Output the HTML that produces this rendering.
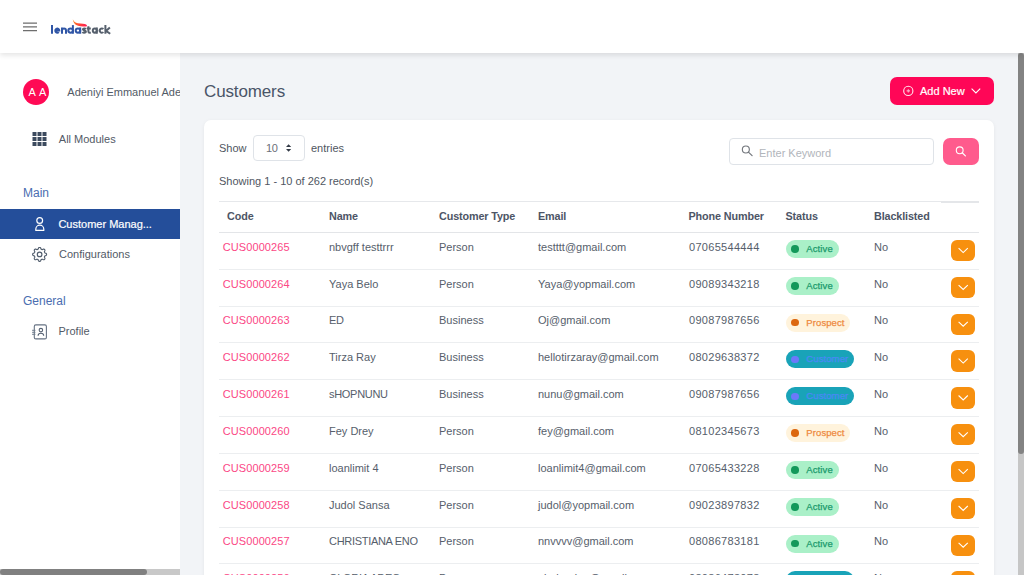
<!DOCTYPE html>
<html><head><meta charset="utf-8"><style>
*{margin:0;padding:0;box-sizing:border-box}
html,body{width:1024px;height:575px;overflow:hidden}
body{position:relative;background:#f2f4f7;font-family:"Liberation Sans",sans-serif}
.t{position:absolute;white-space:nowrap;line-height:1}
.abs{position:absolute}
svg{position:absolute;overflow:visible}
</style></head><body>
<div class="t" style="left:204px;top:83px;font-size:17px;color:#4a5568;letter-spacing:-0.13px;">Customers</div>
<div class="abs" style="left:890px;top:77px;width:104px;height:27.5px;background:#ff0657;border-radius:7px"></div>
<svg style="left:0;top:0" width="1" height="1"><circle cx="908.3" cy="90.9" r="4.6" fill="none" stroke="#fff" stroke-width="1.1" opacity="0.9"/><path d="M906.6 90.9h3.4M908.3 89.2v3.4" stroke="#ffb0c8" stroke-width="1.1"/><path d="M971.6 88.6l4.3 4.3 4.3-4.3" fill="none" stroke="#fff" stroke-width="1.1"/></svg>
<div class="t" style="left:920px;top:86px;font-size:11px;color:#ffffff;-webkit-text-stroke:0.2px #fff;">Add New</div>
<div class="abs" style="left:204px;top:120px;width:790px;height:480px;background:#fff;border-radius:7px;box-shadow:0 1px 4px rgba(0,0,0,0.06)"></div>
<div class="t" style="left:219px;top:143px;font-size:11px;color:#4f5661;">Show</div>
<div class="abs" style="left:253px;top:135px;width:52px;height:26px;border:1px solid #dfe3e8;border-radius:4px"></div>
<div class="t" style="left:266px;top:143px;font-size:11px;color:#6b7079;letter-spacing:-0.3px;">10</div>
<svg style="left:0;top:0" width="1" height="1"><path d="M286 147l2.6-2.8 2.6 2.8z M286 148.9l2.6 2.8 2.6-2.8z" fill="#333a46"/></svg>
<div class="t" style="left:311px;top:143px;font-size:11px;color:#4f5661;">entries</div>
<div class="t" style="left:219px;top:176px;font-size:11px;color:#4f5661;">Showing 1 - 10 of 262 record(s)</div>
<div class="abs" style="left:729px;top:138px;width:205px;height:27px;border:1px solid #dfe3e8;border-radius:4px"></div>
<svg style="left:0;top:0" width="1" height="1"><circle cx="745.85" cy="149.5" r="3.5" fill="none" stroke="#73777d" stroke-width="1.15"/><path d="M748.4 152.1l3.7 3.5" stroke="#73777d" stroke-width="1.2" stroke-linecap="round"/></svg>
<div class="t" style="left:759px;top:148px;font-size:11px;color:#b1b5bb;">Enter Keyword</div>
<div class="abs" style="left:943px;top:138px;width:36px;height:27px;background:#ff5b8d;border-radius:7px"></div>
<svg style="left:0;top:0" width="1" height="1"><circle cx="959.7" cy="150.3" r="3.4" fill="none" stroke="#fff" stroke-width="1.1"/><path d="M962.2 152.8l3.2 3.1" stroke="#fff" stroke-width="1.2" stroke-linecap="round"/></svg>
<div class="abs" style="left:219px;top:200.5px;width:722px;height:1px;background:#e6e8eb"></div>
<div class="abs" style="left:941px;top:201px;width:38px;height:2px;background:#e4e6e9"></div>
<div class="abs" style="left:219px;top:231.5px;width:760px;height:1.5px;background:#e3e5e8"></div>
<div class="t" style="left:227px;top:211px;font-size:10.8px;color:#4d5566;font-weight:700;letter-spacing:-0.12px;">Code</div>
<div class="t" style="left:329px;top:211px;font-size:10.8px;color:#4d5566;font-weight:700;letter-spacing:-0.12px;">Name</div>
<div class="t" style="left:439px;top:211px;font-size:10.8px;color:#4d5566;font-weight:700;letter-spacing:-0.12px;">Customer Type</div>
<div class="t" style="left:538px;top:211px;font-size:10.8px;color:#4d5566;font-weight:700;letter-spacing:-0.12px;">Email</div>
<div class="t" style="left:688.5px;top:211px;font-size:10.8px;color:#4d5566;font-weight:700;letter-spacing:-0.12px;">Phone Number</div>
<div class="t" style="left:785.5px;top:211px;font-size:10.8px;color:#4d5566;font-weight:700;letter-spacing:-0.12px;">Status</div>
<div class="t" style="left:874px;top:211px;font-size:10.8px;color:#4d5566;font-weight:700;letter-spacing:-0.12px;">Blacklisted</div>
<div class="t" style="left:222.7px;top:242px;font-size:11px;color:#fb4785;letter-spacing:0.1px;">CUS0000265</div>
<div class="t" style="left:329px;top:242px;font-size:11px;color:#565e6b;">nbvgff testtrrr</div>
<div class="t" style="left:439px;top:242px;font-size:11px;color:#565e6b;">Person</div>
<div class="t" style="left:538px;top:242px;font-size:11px;color:#565e6b;">testttt@gmail.com</div>
<div class="t" style="left:689px;top:242px;font-size:11px;color:#565e6b;letter-spacing:0.3px;">07065544444</div>
<div class="abs" style="left:785.5px;top:240.00px;width:53.5px;height:18px;background:#aaf0c8;border-radius:9px"></div>
<div class="abs" style="left:791.4px;top:245.20px;width:7.6px;height:7.6px;background:#13985a;border-radius:50%"></div>
<div class="t" style="left:806.3px;top:244px;font-size:9.5px;color:#1a9a6c;letter-spacing:0.1px;-webkit-text-stroke:0.25px #1a9a6c;">Active</div>
<div class="t" style="left:874px;top:242px;font-size:11px;color:#565e6b;">No</div>
<div class="abs" style="left:951px;top:240.00px;width:24px;height:21.2px;background:#f7900f;border-radius:6px"></div>
<svg style="left:0;top:0" width="1" height="1"><path d="M958.6 248.20l4.6 4.4 4.6-4.4" fill="none" stroke="#fff" stroke-width="1.1"/></svg>
<div class="abs" style="left:219px;top:268.83px;width:760px;height:1px;background:#eceef0"></div>
<div class="t" style="left:222.7px;top:279px;font-size:11px;color:#fb4785;letter-spacing:0.1px;">CUS0000264</div>
<div class="t" style="left:329px;top:279px;font-size:11px;color:#565e6b;">Yaya Belo</div>
<div class="t" style="left:439px;top:279px;font-size:11px;color:#565e6b;">Person</div>
<div class="t" style="left:538px;top:279px;font-size:11px;color:#565e6b;">Yaya@yopmail.com</div>
<div class="t" style="left:689px;top:279px;font-size:11px;color:#565e6b;letter-spacing:0.3px;">09089343218</div>
<div class="abs" style="left:785.5px;top:276.83px;width:53.5px;height:18px;background:#aaf0c8;border-radius:9px"></div>
<div class="abs" style="left:791.4px;top:282.03px;width:7.6px;height:7.6px;background:#13985a;border-radius:50%"></div>
<div class="t" style="left:806.3px;top:281px;font-size:9.5px;color:#1a9a6c;letter-spacing:0.1px;-webkit-text-stroke:0.25px #1a9a6c;">Active</div>
<div class="t" style="left:874px;top:279px;font-size:11px;color:#565e6b;">No</div>
<div class="abs" style="left:951px;top:276.83px;width:24px;height:21.2px;background:#f7900f;border-radius:6px"></div>
<svg style="left:0;top:0" width="1" height="1"><path d="M958.6 285.03l4.6 4.4 4.6-4.4" fill="none" stroke="#fff" stroke-width="1.1"/></svg>
<div class="abs" style="left:219px;top:305.66px;width:760px;height:1px;background:#eceef0"></div>
<div class="t" style="left:222.7px;top:315px;font-size:11px;color:#fb4785;letter-spacing:0.1px;">CUS0000263</div>
<div class="t" style="left:329px;top:315px;font-size:11px;color:#565e6b;letter-spacing:-0.3px;">ED</div>
<div class="t" style="left:439px;top:315px;font-size:11px;color:#565e6b;">Business</div>
<div class="t" style="left:538px;top:315px;font-size:11px;color:#565e6b;">Oj@gmail.com</div>
<div class="t" style="left:689px;top:315px;font-size:11px;color:#565e6b;letter-spacing:0.3px;">09087987656</div>
<div class="abs" style="left:785.5px;top:313.66px;width:64.5px;height:18px;background:#fff3dc;border-radius:9px"></div>
<div class="abs" style="left:791.4px;top:318.86px;width:7.6px;height:7.6px;background:#dc670f;border-radius:50%"></div>
<div class="t" style="left:806.3px;top:318px;font-size:9.5px;color:#ee8a40;letter-spacing:0.1px;-webkit-text-stroke:0.25px #ee8a40;">Prospect</div>
<div class="t" style="left:874px;top:315px;font-size:11px;color:#565e6b;">No</div>
<div class="abs" style="left:951px;top:313.66px;width:24px;height:21.2px;background:#f7900f;border-radius:6px"></div>
<svg style="left:0;top:0" width="1" height="1"><path d="M958.6 321.86l4.6 4.4 4.6-4.4" fill="none" stroke="#fff" stroke-width="1.1"/></svg>
<div class="abs" style="left:219px;top:342.49px;width:760px;height:1px;background:#eceef0"></div>
<div class="t" style="left:222.7px;top:352px;font-size:11px;color:#fb4785;letter-spacing:0.1px;">CUS0000262</div>
<div class="t" style="left:329px;top:352px;font-size:11px;color:#565e6b;">Tirza Ray</div>
<div class="t" style="left:439px;top:352px;font-size:11px;color:#565e6b;">Business</div>
<div class="t" style="left:538px;top:352px;font-size:11px;color:#565e6b;">hellotirzaray@gmail.com</div>
<div class="t" style="left:689px;top:352px;font-size:11px;color:#565e6b;letter-spacing:0.3px;">08029638372</div>
<div class="abs" style="left:785.5px;top:350.49px;width:68.5px;height:18px;background:#19a3b8;border-radius:9px"></div>
<div class="abs" style="left:791.4px;top:355.69px;width:7.6px;height:7.6px;background:#6c78fa;border-radius:50%"></div>
<div class="t" style="left:806.3px;top:354px;font-size:9.5px;color:#4a88f6;letter-spacing:0.1px;-webkit-text-stroke:0.25px #4a88f6;">Customer</div>
<div class="t" style="left:874px;top:352px;font-size:11px;color:#565e6b;">No</div>
<div class="abs" style="left:951px;top:350.49px;width:24px;height:21.2px;background:#f7900f;border-radius:6px"></div>
<svg style="left:0;top:0" width="1" height="1"><path d="M958.6 358.69l4.6 4.4 4.6-4.4" fill="none" stroke="#fff" stroke-width="1.1"/></svg>
<div class="abs" style="left:219px;top:379.32px;width:760px;height:1px;background:#eceef0"></div>
<div class="t" style="left:222.7px;top:389px;font-size:11px;color:#fb4785;letter-spacing:0.1px;">CUS0000261</div>
<div class="t" style="left:329px;top:389px;font-size:11px;color:#565e6b;letter-spacing:-0.3px;">sHOPNUNU</div>
<div class="t" style="left:439px;top:389px;font-size:11px;color:#565e6b;">Business</div>
<div class="t" style="left:538px;top:389px;font-size:11px;color:#565e6b;">nunu@gmail.com</div>
<div class="t" style="left:689px;top:389px;font-size:11px;color:#565e6b;letter-spacing:0.3px;">09087987656</div>
<div class="abs" style="left:785.5px;top:387.32px;width:68.5px;height:18px;background:#19a3b8;border-radius:9px"></div>
<div class="abs" style="left:791.4px;top:392.52px;width:7.6px;height:7.6px;background:#6c78fa;border-radius:50%"></div>
<div class="t" style="left:806.3px;top:391px;font-size:9.5px;color:#4a88f6;letter-spacing:0.1px;-webkit-text-stroke:0.25px #4a88f6;">Customer</div>
<div class="t" style="left:874px;top:389px;font-size:11px;color:#565e6b;">No</div>
<div class="abs" style="left:951px;top:387.32px;width:24px;height:21.2px;background:#f7900f;border-radius:6px"></div>
<svg style="left:0;top:0" width="1" height="1"><path d="M958.6 395.52l4.6 4.4 4.6-4.4" fill="none" stroke="#fff" stroke-width="1.1"/></svg>
<div class="abs" style="left:219px;top:416.15px;width:760px;height:1px;background:#eceef0"></div>
<div class="t" style="left:222.7px;top:426px;font-size:11px;color:#fb4785;letter-spacing:0.1px;">CUS0000260</div>
<div class="t" style="left:329px;top:426px;font-size:11px;color:#565e6b;">Fey Drey</div>
<div class="t" style="left:439px;top:426px;font-size:11px;color:#565e6b;">Person</div>
<div class="t" style="left:538px;top:426px;font-size:11px;color:#565e6b;">fey@gmail.com</div>
<div class="t" style="left:689px;top:426px;font-size:11px;color:#565e6b;letter-spacing:0.3px;">08102345673</div>
<div class="abs" style="left:785.5px;top:424.15px;width:64.5px;height:18px;background:#fff3dc;border-radius:9px"></div>
<div class="abs" style="left:791.4px;top:429.35px;width:7.6px;height:7.6px;background:#dc670f;border-radius:50%"></div>
<div class="t" style="left:806.3px;top:428px;font-size:9.5px;color:#ee8a40;letter-spacing:0.1px;-webkit-text-stroke:0.25px #ee8a40;">Prospect</div>
<div class="t" style="left:874px;top:426px;font-size:11px;color:#565e6b;">No</div>
<div class="abs" style="left:951px;top:424.15px;width:24px;height:21.2px;background:#f7900f;border-radius:6px"></div>
<svg style="left:0;top:0" width="1" height="1"><path d="M958.6 432.35l4.6 4.4 4.6-4.4" fill="none" stroke="#fff" stroke-width="1.1"/></svg>
<div class="abs" style="left:219px;top:452.98px;width:760px;height:1px;background:#eceef0"></div>
<div class="t" style="left:222.7px;top:463px;font-size:11px;color:#fb4785;letter-spacing:0.1px;">CUS0000259</div>
<div class="t" style="left:329px;top:463px;font-size:11px;color:#565e6b;">loanlimit 4</div>
<div class="t" style="left:439px;top:463px;font-size:11px;color:#565e6b;">Person</div>
<div class="t" style="left:538px;top:463px;font-size:11px;color:#565e6b;">loanlimit4@gmail.com</div>
<div class="t" style="left:689px;top:463px;font-size:11px;color:#565e6b;letter-spacing:0.3px;">07065433228</div>
<div class="abs" style="left:785.5px;top:460.98px;width:53.5px;height:18px;background:#aaf0c8;border-radius:9px"></div>
<div class="abs" style="left:791.4px;top:466.18px;width:7.6px;height:7.6px;background:#13985a;border-radius:50%"></div>
<div class="t" style="left:806.3px;top:465px;font-size:9.5px;color:#1a9a6c;letter-spacing:0.1px;-webkit-text-stroke:0.25px #1a9a6c;">Active</div>
<div class="t" style="left:874px;top:463px;font-size:11px;color:#565e6b;">No</div>
<div class="abs" style="left:951px;top:460.98px;width:24px;height:21.2px;background:#f7900f;border-radius:6px"></div>
<svg style="left:0;top:0" width="1" height="1"><path d="M958.6 469.18l4.6 4.4 4.6-4.4" fill="none" stroke="#fff" stroke-width="1.1"/></svg>
<div class="abs" style="left:219px;top:489.81px;width:760px;height:1px;background:#eceef0"></div>
<div class="t" style="left:222.7px;top:500px;font-size:11px;color:#fb4785;letter-spacing:0.1px;">CUS0000258</div>
<div class="t" style="left:329px;top:500px;font-size:11px;color:#565e6b;">Judol Sansa</div>
<div class="t" style="left:439px;top:500px;font-size:11px;color:#565e6b;">Person</div>
<div class="t" style="left:538px;top:500px;font-size:11px;color:#565e6b;">judol@yopmail.com</div>
<div class="t" style="left:689px;top:500px;font-size:11px;color:#565e6b;letter-spacing:0.3px;">09023897832</div>
<div class="abs" style="left:785.5px;top:497.81px;width:53.5px;height:18px;background:#aaf0c8;border-radius:9px"></div>
<div class="abs" style="left:791.4px;top:503.01px;width:7.6px;height:7.6px;background:#13985a;border-radius:50%"></div>
<div class="t" style="left:806.3px;top:502px;font-size:9.5px;color:#1a9a6c;letter-spacing:0.1px;-webkit-text-stroke:0.25px #1a9a6c;">Active</div>
<div class="t" style="left:874px;top:500px;font-size:11px;color:#565e6b;">No</div>
<div class="abs" style="left:951px;top:497.81px;width:24px;height:21.2px;background:#f7900f;border-radius:6px"></div>
<svg style="left:0;top:0" width="1" height="1"><path d="M958.6 506.01l4.6 4.4 4.6-4.4" fill="none" stroke="#fff" stroke-width="1.1"/></svg>
<div class="abs" style="left:219px;top:526.64px;width:760px;height:1px;background:#eceef0"></div>
<div class="t" style="left:222.7px;top:536px;font-size:11px;color:#fb4785;letter-spacing:0.1px;">CUS0000257</div>
<div class="t" style="left:329px;top:536px;font-size:11px;color:#565e6b;letter-spacing:-0.3px;">CHRISTIANA ENO</div>
<div class="t" style="left:439px;top:536px;font-size:11px;color:#565e6b;">Person</div>
<div class="t" style="left:538px;top:536px;font-size:11px;color:#565e6b;">nnvvvv@gmail.com</div>
<div class="t" style="left:689px;top:536px;font-size:11px;color:#565e6b;letter-spacing:0.3px;">08086783181</div>
<div class="abs" style="left:785.5px;top:534.64px;width:53.5px;height:18px;background:#aaf0c8;border-radius:9px"></div>
<div class="abs" style="left:791.4px;top:539.84px;width:7.6px;height:7.6px;background:#13985a;border-radius:50%"></div>
<div class="t" style="left:806.3px;top:539px;font-size:9.5px;color:#1a9a6c;letter-spacing:0.1px;-webkit-text-stroke:0.25px #1a9a6c;">Active</div>
<div class="t" style="left:874px;top:536px;font-size:11px;color:#565e6b;">No</div>
<div class="abs" style="left:951px;top:534.64px;width:24px;height:21.2px;background:#f7900f;border-radius:6px"></div>
<svg style="left:0;top:0" width="1" height="1"><path d="M958.6 542.84l4.6 4.4 4.6-4.4" fill="none" stroke="#fff" stroke-width="1.1"/></svg>
<div class="abs" style="left:219px;top:563.47px;width:760px;height:1px;background:#eceef0"></div>
<div class="t" style="left:222.7px;top:573px;font-size:11px;color:#fb4785;letter-spacing:0.1px;">CUS0000256</div>
<div class="t" style="left:329px;top:573px;font-size:11px;color:#565e6b;letter-spacing:-0.3px;">GLORIA ADEO</div>
<div class="t" style="left:439px;top:573px;font-size:11px;color:#565e6b;">Person</div>
<div class="t" style="left:538px;top:573px;font-size:11px;color:#565e6b;">gloriaadeo@gmail.com</div>
<div class="t" style="left:689px;top:573px;font-size:11px;color:#565e6b;letter-spacing:0.3px;">08086473078</div>
<div class="abs" style="left:785.5px;top:571.47px;width:68.5px;height:18px;background:#19a3b8;border-radius:9px"></div>
<div class="abs" style="left:791.4px;top:576.67px;width:7.6px;height:7.6px;background:#6c78fa;border-radius:50%"></div>
<div class="t" style="left:806.3px;top:575px;font-size:9.5px;color:#4a88f6;letter-spacing:0.1px;-webkit-text-stroke:0.25px #4a88f6;">Customer</div>
<div class="t" style="left:874px;top:573px;font-size:11px;color:#565e6b;">No</div>
<div class="abs" style="left:951px;top:571.47px;width:24px;height:21.2px;background:#f7900f;border-radius:6px"></div>
<svg style="left:0;top:0" width="1" height="1"><path d="M958.6 579.67l4.6 4.4 4.6-4.4" fill="none" stroke="#fff" stroke-width="1.1"/></svg>
<div class="abs" style="left:1018px;top:53px;width:6px;height:522px;background:#c6c6c6"></div>
<div class="abs" style="left:1018px;top:53px;width:6px;height:401px;background:#838383;border-radius:3px"></div>
<div class="abs" style="left:0;top:53px;width:180px;height:522px;background:#fff;overflow:hidden">
<div class="abs" style="left:22.5px;top:26px;width:26px;height:26px;border-radius:50%;background:#ff0a55"></div>
<div class="t" style="left:28.6px;top:34px;font-size:11px;color:#ffffff;letter-spacing:0.6px;">A A</div>
<div class="t" style="left:67.3px;top:34px;font-size:11px;color:#525a66;">Adeniyi Emmanuel Ademola</div>
<svg style="left:0;top:0" width="1" height="1"><rect x="32.5" y="79" width="4" height="4" fill="#3c4a5e"/><rect x="32.5" y="84" width="4" height="4" fill="#3c4a5e"/><rect x="32.5" y="89" width="4" height="4" fill="#3c4a5e"/><rect x="37.5" y="79" width="4" height="4" fill="#3c4a5e"/><rect x="37.5" y="84" width="4" height="4" fill="#3c4a5e"/><rect x="37.5" y="89" width="4" height="4" fill="#3c4a5e"/><rect x="42.5" y="79" width="4" height="4" fill="#3c4a5e"/><rect x="42.5" y="84" width="4" height="4" fill="#3c4a5e"/><rect x="42.5" y="89" width="4" height="4" fill="#3c4a5e"/></svg>
<div class="t" style="left:58.8px;top:81px;font-size:11px;color:#525a66;">All Modules</div>
<div class="t" style="left:23px;top:134px;font-size:12px;color:#4a6db0;">Main</div>
<div class="abs" style="left:0;top:155.6px;width:180px;height:30.6px;background:#244e9a"></div>
<svg style="left:0;top:0" width="1" height="1"><circle cx="39.7" cy="167.5" r="2.9" fill="none" stroke="#fff" stroke-width="1.2"/><path d="M35.8 177.4v-1.2a4 4 0 0 1 8 0v1.2z" fill="none" stroke="#fff" stroke-width="1.2" stroke-linejoin="round"/></svg>
<div class="t" style="left:58.4px;top:166px;font-size:11px;color:#ffffff;-webkit-text-stroke:0.2px #fff;">Customer Manag...</div>
<svg style="left:0;top:0" width="1" height="1"><g transform="translate(39.6 201.4)"><path d="M6.95 0.00 L6.93 0.27 L6.88 0.54 L6.74 0.80 L6.47 1.02 L6.03 1.20 L5.59 1.34 L5.30 1.50 L5.14 1.67 L5.03 1.86 L4.94 2.05 L4.87 2.24 L4.81 2.45 L4.81 2.69 L4.90 3.01 L5.11 3.42 L5.30 3.85 L5.33 4.20 L5.24 4.48 L5.10 4.71 L4.91 4.91 L4.71 5.10 L4.48 5.24 L4.20 5.33 L3.85 5.30 L3.42 5.11 L3.01 4.90 L2.69 4.81 L2.45 4.81 L2.24 4.87 L2.05 4.94 L1.86 5.03 L1.67 5.14 L1.50 5.30 L1.34 5.59 L1.20 6.03 L1.02 6.47 L0.80 6.74 L0.54 6.88 L0.27 6.93 L0.00 6.95 L-0.27 6.93 L-0.54 6.88 L-0.80 6.74 L-1.02 6.47 L-1.20 6.03 L-1.34 5.59 L-1.50 5.30 L-1.67 5.14 L-1.86 5.03 L-2.05 4.94 L-2.24 4.87 L-2.45 4.81 L-2.69 4.81 L-3.01 4.90 L-3.42 5.11 L-3.85 5.30 L-4.20 5.33 L-4.48 5.24 L-4.71 5.10 L-4.91 4.91 L-5.10 4.71 L-5.24 4.48 L-5.33 4.20 L-5.30 3.85 L-5.11 3.42 L-4.90 3.01 L-4.81 2.69 L-4.81 2.45 L-4.87 2.24 L-4.94 2.05 L-5.03 1.86 L-5.14 1.67 L-5.30 1.50 L-5.59 1.34 L-6.03 1.20 L-6.47 1.02 L-6.74 0.80 L-6.88 0.54 L-6.93 0.27 L-6.95 0.00 L-6.93 -0.27 L-6.88 -0.54 L-6.74 -0.80 L-6.47 -1.02 L-6.03 -1.20 L-5.59 -1.34 L-5.30 -1.50 L-5.14 -1.67 L-5.03 -1.86 L-4.94 -2.05 L-4.87 -2.24 L-4.81 -2.45 L-4.81 -2.69 L-4.90 -3.01 L-5.11 -3.42 L-5.30 -3.85 L-5.33 -4.20 L-5.24 -4.48 L-5.10 -4.71 L-4.91 -4.91 L-4.71 -5.10 L-4.48 -5.24 L-4.20 -5.33 L-3.85 -5.30 L-3.42 -5.11 L-3.01 -4.90 L-2.69 -4.81 L-2.45 -4.81 L-2.24 -4.87 L-2.05 -4.94 L-1.86 -5.03 L-1.67 -5.14 L-1.50 -5.30 L-1.34 -5.59 L-1.20 -6.03 L-1.02 -6.47 L-0.80 -6.74 L-0.54 -6.88 L-0.27 -6.93 L-0.00 -6.95 L0.27 -6.93 L0.54 -6.88 L0.80 -6.74 L1.02 -6.47 L1.20 -6.03 L1.34 -5.59 L1.50 -5.30 L1.67 -5.14 L1.86 -5.03 L2.05 -4.94 L2.24 -4.87 L2.45 -4.81 L2.69 -4.81 L3.01 -4.90 L3.42 -5.11 L3.85 -5.30 L4.20 -5.33 L4.48 -5.24 L4.71 -5.10 L4.91 -4.91 L5.10 -4.71 L5.24 -4.48 L5.33 -4.20 L5.30 -3.85 L5.11 -3.42 L4.90 -3.01 L4.81 -2.69 L4.81 -2.45 L4.87 -2.24 L4.94 -2.05 L5.03 -1.86 L5.14 -1.67 L5.30 -1.50 L5.59 -1.34 L6.03 -1.20 L6.47 -1.02 L6.74 -0.80 L6.88 -0.54 L6.93 -0.27Z" fill="none" stroke="#515d6d" stroke-width="1.15" stroke-linejoin="round"/><circle r="2.3" fill="none" stroke="#515d6d" stroke-width="1.15"/></g></svg>
<div class="t" style="left:59px;top:196px;font-size:11px;color:#525a66;">Configurations</div>
<div class="t" style="left:23px;top:242px;font-size:12px;color:#4a6db0;">General</div>
<svg style="left:0;top:0" width="1" height="1"><rect x="34.3" y="271.9" width="12.1" height="14" rx="1.5" fill="none" stroke="#667283" stroke-width="1.1"/><path d="M32.1 277.3h3.3M32.1 279.3h3.3M32.1 281.3h3.3" stroke="#707c8c" stroke-width="1"/><circle cx="40.9" cy="277.1" r="1.75" fill="none" stroke="#556172" stroke-width="1.1"/><path d="M38.1 282.8a2.8 2.6 0 0 1 5.6 0" fill="none" stroke="#556172" stroke-width="1.1"/></svg>
<div class="t" style="left:58.5px;top:273px;font-size:11px;color:#525a66;">Profile</div>
<div class="abs" style="left:0;top:516px;width:180px;height:6px;background:#c8c8c8"></div>
<div class="abs" style="left:0;top:516px;width:147px;height:6px;background:#808080;border-radius:3px"></div>
</div>
<div class="abs" style="left:0;top:0;width:1024px;height:53px;background:#fff;box-shadow:0 2.5px 5px rgba(0,0,0,0.1)"></div>
<svg style="left:0;top:0" width="1" height="1"><path d="M23 23.2h14M23 26.9h14M23 30.6h14" stroke="#6e6e6e" stroke-width="1.3"/></svg>
<svg style="left:0;top:0" width="1" height="1"><defs><linearGradient id="sw" gradientUnits="userSpaceOnUse" x1="73" y1="20" x2="87" y2="26"><stop offset="0" stop-color="#ff8a1c"/><stop offset="0.45" stop-color="#ff4a36"/><stop offset="1" stop-color="#ff1a55"/></linearGradient></defs><path d="M72.8 19.3 C73.8 22.3 76.5 23.2 80.5 23.6 C84 23.9 86.2 24.0 86.9 25.3 C87.1 26.2 86.5 26.6 85.6 26.5 C82 26.4 78.5 26.2 76.2 24.9 C74.3 23.8 73.0 21.9 72.8 19.3 Z" fill="url(#sw)"/><g fill="none" stroke="#3056a6" stroke-width="2"><path d="M52.0 25.1V33.75"/><path d="M55.3 30.6H59.3A2.0 2.15 0 1 0 58.75 32.15"/><path d="M62.0 27.45V33.75M62.0 30.6A2.0 2.15 0 0 1 66.0 30.6V33.75"/><path d="M72.9 25.1V33.75"/><ellipse cx="70.6" cy="30.6" rx="2.3" ry="2.15"/><path d="M80.2 27.45V33.75"/><ellipse cx="77.95" cy="30.6" rx="2.25" ry="2.15"/></g><g fill="none" stroke="#56606d" stroke-width="2"><path d="M85.9 29.1C85.5 28.6 84.9 28.45 84.3 28.45C83.4 28.45 82.9 28.9 82.95 29.5C83.05 30.55 85.8 30.35 85.9 31.6C85.95 32.35 85.2 32.75 84.2 32.75C83.5 32.75 82.9 32.55 82.5 31.95"/><path d="M88.4 26.2V31.5Q88.4 32.75 89.7 32.75H90.8M86.8 28.45H90.8"/><path d="M96.8 27.45V33.75"/><ellipse cx="94.8" cy="30.6" rx="2.0" ry="2.15"/><path d="M103.3 29.2A2.0 2.15 0 1 0 103.3 32.0"/><path d="M105.4 25.1V33.75M109.9 27.6L106.0 30.9L110.2 33.75"/></g></svg>
</body></html>
